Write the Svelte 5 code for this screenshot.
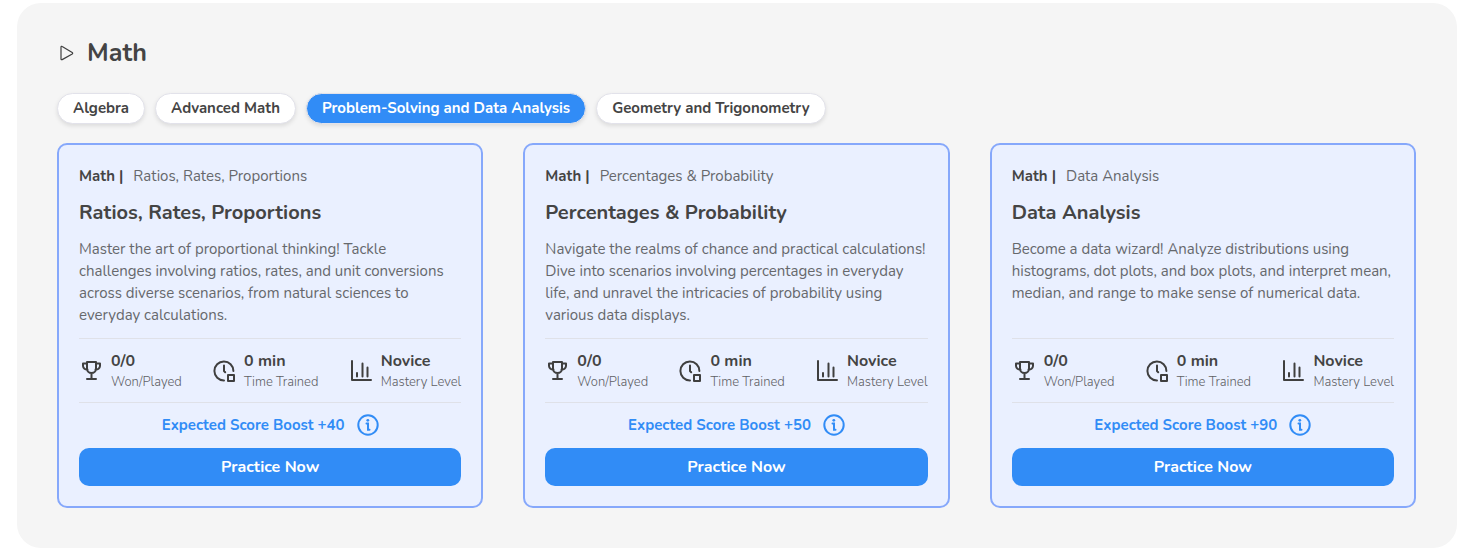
<script>
    const topics = [
        "Algebra",
        "Advanced Math",
        "Problem-Solving and Data Analysis",
        "Geometry and Trigonometry",
    ];

    const cards = [
        {
            title: "Ratios, Rates, Proportions",
            text: "Master the art of proportional thinking! Tackle challenges involving ratios, rates, and unit conversions across diverse scenarios, from natural sciences to everyday calculations.",
            boost: 40,
        },
        {
            title: "Percentages & Probability",
            text: "Navigate the realms of chance and practical calculations! Dive into scenarios involving percentages in everyday life, and unravel the intricacies of probability using various data displays.",
            boost: 50,
        },
        {
            title: "Data Analysis",
            text: "Become a data wizard! Analyze distributions using histograms, dot plots, and box plots, and interpret mean, median, and range to make sense of numerical data.",
            boost: 90,
        },
    ];

    const stats = [
        { icon: "trophy", value: "0/0", label: "Won/Played" },
        { icon: "clock", value: "0 min", label: "Time Trained" },
        { icon: "chart", value: "Novice", label: "Mastery Level" },
    ];

    let active = $state("Problem-Solving and Data Analysis");
</script>

<section class="panel">
    <header class="panel-header">
        <svg class="play" viewBox="0 0 20 20" aria-hidden="true">
            <path d="M4 4.100v11.800c0 .7.6 1 1.200.7l10-5.700c.6-.4.6-1.100 0-1.500L5.200 3.500c-.6-.4-1.200-.1-1.200.6z" />
        </svg>
        <h2>Math</h2>
    </header>

    <nav class="topics">
        {#each topics as topic (topic)}
            <button class="topic" class:active={topic === active} onclick={() => (active = topic)}>{topic}</button>
        {/each}
    </nav>

    <div class="cards">
        {#each cards as card (card.title)}
            <article class="card">
                <p class="crumb"><strong>Math |</strong><span>{card.title}</span></p>
                <h3>{card.title}</h3>
                <p class="text">{card.text}</p>

                <div class="stats">
                    {#each stats as stat (stat.label)}
                        <div class="stat">
                            <svg class="stat-icon" viewBox="0 0 24 24" aria-hidden="true">
                                {#if stat.icon === "trophy"}
                                    <path d="M8 3h9v6.500a4.500 4.500 0 0 1-9 0zM8 4.500H4V7a4 3.800 0 0 0 4.500 3.500M17 4.500h4V7a4 3.800 0 0 1-4.500 3.500M12.500 14v6M8 20h9" />
                                {:else if stat.icon === "clock"}
                                    <path d="M12 21.500A9.500 9.500 0 1 1 21.400 12M12 6.500V12l1.200 1.200M16 16h6v6h-6z" />
                                {:else}
                                    <path d="M3 2v19h19M8 17.500V14M13.500 17.500V4.500M18.500 17.500V8.500" />
                                {/if}
                            </svg>
                            <div>
                                <div class="value">{stat.value}</div>
                                <div class="label">{stat.label}</div>
                            </div>
                        </div>
                    {/each}
                </div>

                <div class="boost">
                    <span>Expected Score Boost +{card.boost}</span>
                    <button class="info" aria-label="About the expected score boost">
                        <svg viewBox="0 0 22 22" aria-hidden="true">
                            <circle cx="11" cy="11" r="9.700" />
                            <path d="M9.500 9.500h1.500v6.200h1.500" />
                            <circle class="dot" cx="10.800" cy="6.300" r="1.400" />
                        </svg>
                    </button>
                </div>
                <button class="practice">Practice Now</button>
            </article>
        {/each}
    </div>
</section>

<style>
    :global(body) {
        margin: 0;
        background: #fff;
    }

    .panel {
        margin: 3px 14px 4px 17px;
        padding: 33px 41px 40px 40px;
        border-radius: 24px;
        background: #f5f5f5;
        color: #444;
        font-family: Nunito, Lato, sans-serif;
    }

    h2,
    h3,
    p {
        margin: 0;
    }

    button {
        font-family: inherit;
        cursor: pointer;
    }

    .panel-header {
        display: flex;
        align-items: center;
        gap: 10px;
    }

    .play {
        width: 20px;
        height: 20px;
        fill: none;
        stroke: #3f3f3f;
        stroke-width: 1.2;
    }

    h2 {
        font-size: 25px;
        font-weight: 700;
        line-height: 34px;
    }

    .topics {
        display: flex;
        flex-wrap: wrap;
        gap: 10px;
        margin: 23px 0 19px;
    }

    .topic {
        padding: 0 15px;
        border: 1px solid #e2e2ea;
        border-radius: 16px;
        background: #fff;
        color: #444;
        font-size: 15px;
        font-weight: 700;
        line-height: 29px;
        box-shadow: 0 2px 4px rgba(0, 0, 0, 0.1);
    }

    .topic.active {
        background: #318cf6;
        color: #fff;
    }

    .cards {
        display: grid;
        grid-template-columns: repeat(3, 1fr);
        gap: 40px;
    }

    .card {
        display: flex;
        flex-direction: column;
        padding: 20px;
        border: 2px solid #86a8fb;
        border-radius: 10px;
        background: #eaf0ff;
    }

    .crumb {
        display: flex;
        gap: 10px;
        color: #66686c;
        font-size: 15px;
        line-height: 22px;
    }

    .crumb strong {
        color: #444;
        font-weight: 700;
    }

    h3 {
        margin: 12px 0;
        font-size: 20px;
        font-weight: 700;
        line-height: 27px;
    }

    .text {
        flex: 1;
        margin-bottom: 12px;
        color: #66686c;
        font-size: 15px;
        line-height: 22px;
    }

    .stats {
        display: flex;
        justify-content: space-between;
        padding: 11px 0 10px;
        border: solid #dfe1e8;
        border-width: 1px 0;
        white-space: nowrap;
    }

    .stat {
        display: flex;
        align-items: center;
        gap: 8px;
    }

    .stat-icon {
        width: 24px;
        height: 24px;
        fill: none;
        stroke: #3f3f3f;
        stroke-width: 2;
        stroke-linecap: round;
        stroke-linejoin: round;
    }

    .value {
        font-size: 16px;
        font-weight: 700;
        line-height: 22px;
    }

    .label {
        color: #5f6165;
        font-size: 13px;
        font-weight: 300;
        line-height: 20px;
    }

    .boost {
        display: flex;
        align-items: center;
        justify-content: center;
        gap: 12px;
        margin: 11px 0 12px;
        color: #318cf6;
        font-size: 15px;
        font-weight: 700;
        line-height: 22px;
    }

    .info {
        width: 22px;
        height: 22px;
        padding: 0;
        border: 0;
        background: none;
    }

    .info svg {
        display: block;
        fill: none;
        stroke: #318cf6;
        stroke-width: 2;
        stroke-linecap: round;
    }

    .info .dot {
        fill: #318cf6;
        stroke: none;
    }

    .practice {
        padding: 0;
        border: 0;
        border-radius: 10px;
        background: #318cf6;
        color: #fff;
        font-size: 16px;
        font-weight: 700;
        line-height: 38px;
    }
</style>
